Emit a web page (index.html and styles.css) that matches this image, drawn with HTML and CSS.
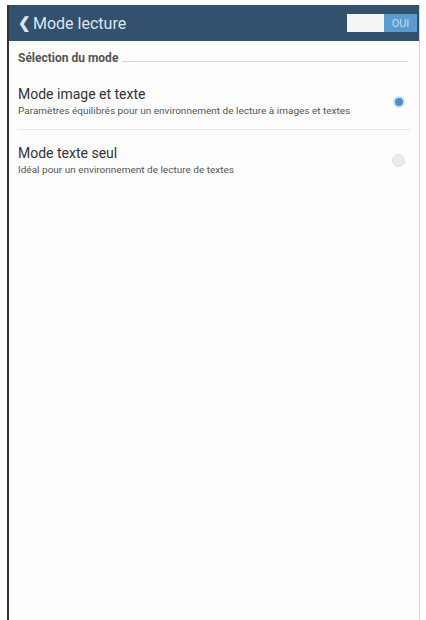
FILE: index.html
```html
<!DOCTYPE html>
<html lang="fr">
<head>
<meta charset="utf-8">
<link rel="stylesheet" href="styles.css">
</head>
<body>
<div class="frame">
  <header class="bar">
    <div class="title"><span class="chev">❮</span>Mode lecture</div>
    <div class="toggle"><span class="off"></span><span class="on">OUI</span></div>
  </header>
  <div class="content">
    <div class="section"><span class="section-label">Sélection du mode</span><span class="section-line"></span></div>
    <div class="item item-first">
      <div class="item-text">
        <div class="item-title">Mode image et texte</div>
        <div class="item-sub">Paramètres équilibrés pour un environnement de lecture à images et textes</div>
      </div>
      <span class="radio radio-on"></span>
    </div>
    <div class="divider"></div>
    <div class="item">
      <div class="item-text">
        <div class="item-title">Mode texte seul</div>
        <div class="item-sub">Idéal pour un environnement de lecture de textes</div>
      </div>
      <span class="radio radio-off"></span>
    </div>
  </div>
</div>
</body>
</html>
```
FILE: styles.css
```css
html, body { margin: 0; padding: 0; background: #fff; }
body { font-family: Roboto, "Noto Sans", sans-serif; }
.frame {
  margin: 5px 6px 0 7px;
  height: 615px;
  border-left: 2px solid #333;
  border-right: 1px solid #d4d4d4;
  background: #fdfdfd;
  box-sizing: border-box;
}
.bar {
  height: 36px;
  background: #34506f;
  display: flex;
  align-items: center;
  justify-content: space-between;
  padding: 0 2px 0 9px;
}
.title { color: #dde5ee; font-size: 16px; display: flex; align-items: center; }
.chev { font-size: 15px; margin-right: 2px; font-weight: bold; }
.toggle { display: flex; height: 18px; }
.toggle .off { width: 37px; background: #f3f5f7; }
.toggle .on { width: 33px; background: #5b9bcf; color: #c4def1; font-size: 11px; display: flex; align-items: center; justify-content: center; }
.content { padding: 0 9px 0 9px; }
.section { display: flex; align-items: center; padding-top: 10px; height: 14px; }
.section-label { font-size: 12px; font-weight: bold; color: #555; }
.section-line { flex: 1; height: 1px; background: #d8d8d8; margin: 6px 2px 0 4px; }
.item { display: flex; align-items: center; justify-content: space-between; padding: 15px 0 12px 0; }
.item-first { padding-top: 21px; }
.item-title { font-size: 14px; color: #333; line-height: 17px; }
.item-sub { font-size: 10px; color: #555; margin-top: 2px; line-height: 12px; transform-origin: left; transform: scaleY(0.9); }
.radio { width: 12px; height: 12px; border-radius: 50%; margin-right: 5px; box-sizing: border-box; }
.radio-on { background: #4d8ed0; border: 2px solid #cfe2f3; }
.radio-off { width: 13px; height: 13px; background: #ebebeb; border: 1px solid #e0e0e0; }
.divider { height: 1px; background: #e6e6e6; }
```
